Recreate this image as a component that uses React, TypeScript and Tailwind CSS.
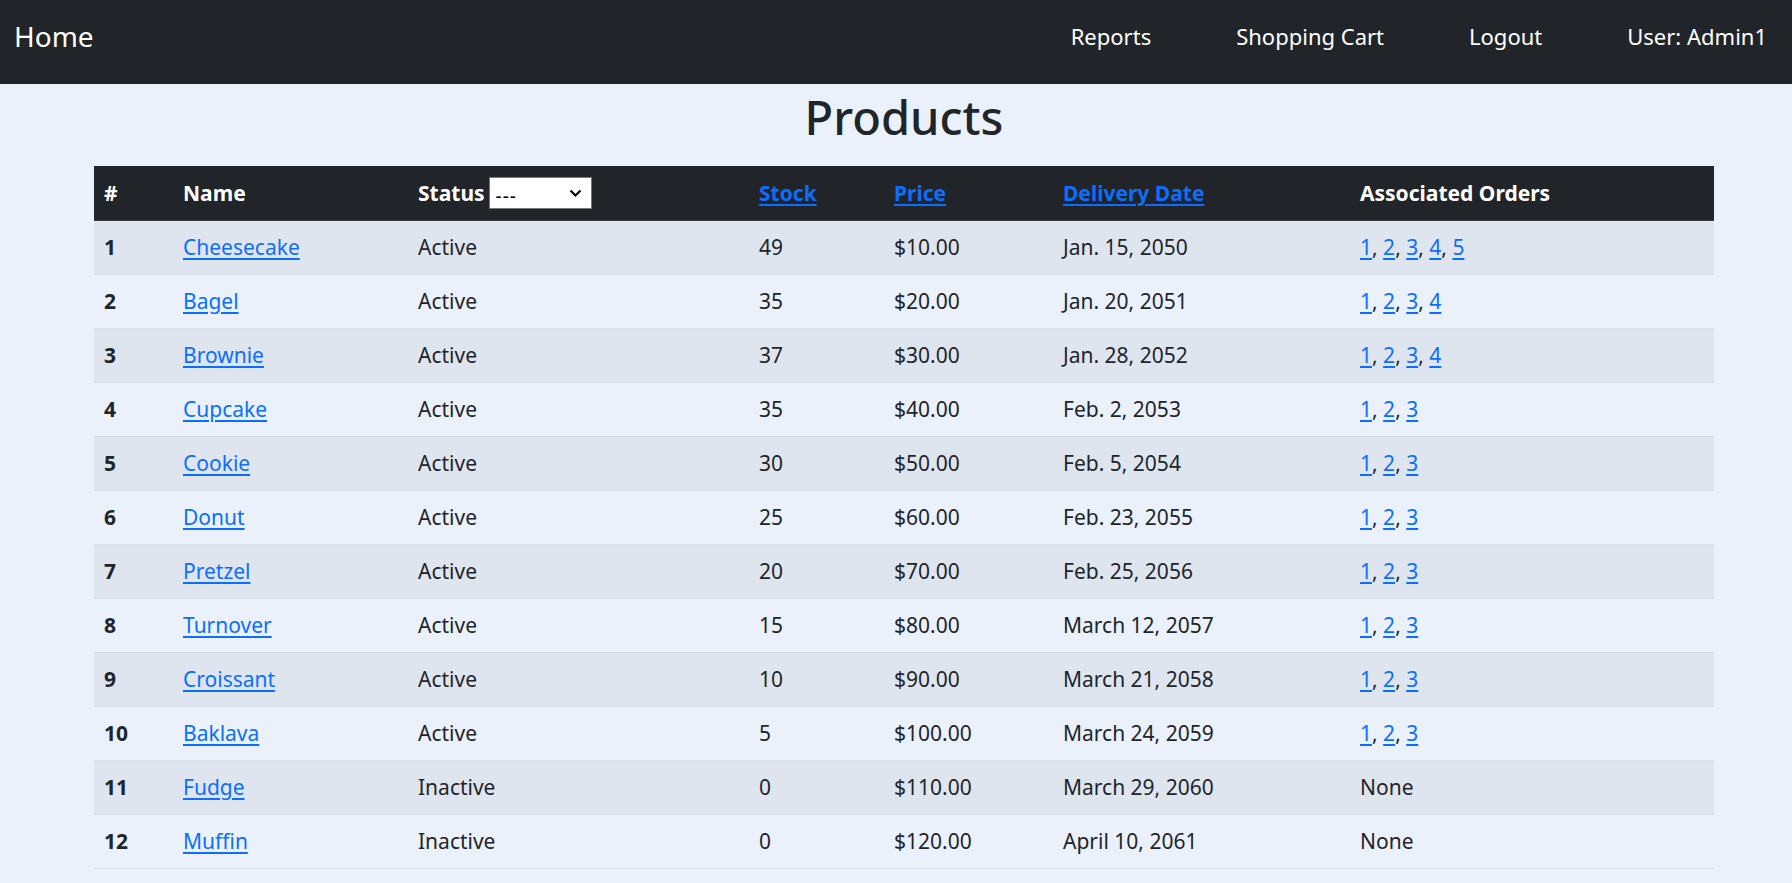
import type React from 'react';

interface Product {
  id: number;
  name: string;
  status: string;
  stock: number;
  price: string;
  delivery: string;
  orders: number[];
}

const products: Product[] = [
  { id: 1, name: 'Cheesecake', status: 'Active', stock: 49, price: '$10.00', delivery: 'Jan. 15, 2050', orders: [1, 2, 3, 4, 5] },
  { id: 2, name: 'Bagel', status: 'Active', stock: 35, price: '$20.00', delivery: 'Jan. 20, 2051', orders: [1, 2, 3, 4] },
  { id: 3, name: 'Brownie', status: 'Active', stock: 37, price: '$30.00', delivery: 'Jan. 28, 2052', orders: [1, 2, 3, 4] },
  { id: 4, name: 'Cupcake', status: 'Active', stock: 35, price: '$40.00', delivery: 'Feb. 2, 2053', orders: [1, 2, 3] },
  { id: 5, name: 'Cookie', status: 'Active', stock: 30, price: '$50.00', delivery: 'Feb. 5, 2054', orders: [1, 2, 3] },
  { id: 6, name: 'Donut', status: 'Active', stock: 25, price: '$60.00', delivery: 'Feb. 23, 2055', orders: [1, 2, 3] },
  { id: 7, name: 'Pretzel', status: 'Active', stock: 20, price: '$70.00', delivery: 'Feb. 25, 2056', orders: [1, 2, 3] },
  { id: 8, name: 'Turnover', status: 'Active', stock: 15, price: '$80.00', delivery: 'March 12, 2057', orders: [1, 2, 3] },
  { id: 9, name: 'Croissant', status: 'Active', stock: 10, price: '$90.00', delivery: 'March 21, 2058', orders: [1, 2, 3] },
  { id: 10, name: 'Baklava', status: 'Active', stock: 5, price: '$100.00', delivery: 'March 24, 2059', orders: [1, 2, 3] },
  { id: 11, name: 'Fudge', status: 'Inactive', stock: 0, price: '$110.00', delivery: 'March 29, 2060', orders: [] },
  { id: 12, name: 'Muffin', status: 'Inactive', stock: 0, price: '$120.00', delivery: 'April 10, 2061', orders: [] },
];

const linkCls = 'text-[#0d6efd] underline underline-offset-[3px] decoration-[1.5px]';

const App: React.FC = () => {
  return (
    <div className="min-h-[883px] bg-[#eaf1fb] text-[#212529] font-['Noto_Sans',sans-serif]">
      {/* Навбар */}
      <nav className="h-[84px] bg-[#212529] flex items-start justify-between pl-[14px] pr-[25px] pt-[15px]">
        <a href="#" className="text-[28px] leading-[42px] text-white">Home</a>
        <div className="flex gap-[85px] text-[22px] leading-[42px] text-white">
          <a href="#">Reports</a>
          <a href="#">Shopping Cart</a>
          <a href="#">Logout</a>
          <span>User: Admin1</span>
        </div>
      </nav>

      {/* Заголовок */}
      <h1 className="text-center text-[47px] font-medium leading-[56px] pt-[5px] pb-[21px] pl-[16px]">Products</h1>

      {/* Таблица */}
      <div className="ml-[94px] w-[1620px]">
        <table className="w-full border-collapse text-[21px] table-fixed">
          <colgroup>
            <col className="w-[79px]" />
            <col className="w-[235px]" />
            <col className="w-[341px]" />
            <col className="w-[135px]" />
            <col className="w-[169px]" />
            <col className="w-[297px]" />
            <col className="w-[364px]" />
          </colgroup>
          <thead>
            <tr className="bg-[#212529] text-white text-left font-bold border-b border-[#373b3e]">
              <th className="px-[10px] py-[10px] leading-[34px]">#</th>
              <th className="px-[10px] py-[10px] leading-[34px]">Name</th>
              <th className="px-[10px] py-[10px] leading-[34px]">
                <div className="flex items-center gap-[4px]">
                  <span>Status</span>
                  <div className="relative w-[103px] h-[32px] bg-white border border-[#767676]">
                    <select className="appearance-none w-full h-full bg-transparent text-[#000] text-[19px] font-normal pl-[6px] leading-[30px] outline-none tracking-[1px]">
                      <option>---</option>
                      <option>Active</option>
                      <option>Inactive</option>
                    </select>
                    <svg className="absolute right-[9px] top-[11px] pointer-events-none" width="13" height="9" viewBox="0 0 13 9">
                      <path d="M1.5 1.5 L6.5 6.5 L11.5 1.5" fill="none" stroke="#000" strokeWidth="2.2" />
                    </svg>
                  </div>
                </div>
              </th>
              <th className="px-[10px] py-[10px] leading-[34px]"><a href="#" className={linkCls}>Stock</a></th>
              <th className="px-[10px] py-[10px] leading-[34px]"><a href="#" className={linkCls}>Price</a></th>
              <th className="px-[10px] py-[10px] leading-[34px]"><a href="#" className={linkCls}>Delivery Date</a></th>
              <th className="px-[10px] py-[10px] leading-[34px]">Associated Orders</th>
            </tr>
          </thead>
          <tbody>
            {products.map((p, i) => (
              <tr key={p.id} className={`${i % 2 === 0 ? 'bg-[#dfe5ef]' : 'bg-[#eaf1fb]'} border-b border-[#d8dde6]`}>
                <td className="px-[10px] py-[10px] leading-[33px] font-bold">{p.id}</td>
                <td className="px-[10px] py-[10px] leading-[33px]"><a href="#" className={linkCls}>{p.name}</a></td>
                <td className="px-[10px] py-[10px] leading-[33px]">{p.status}</td>
                <td className="px-[10px] py-[10px] leading-[33px]">{p.stock}</td>
                <td className="px-[10px] py-[10px] leading-[33px]">{p.price}</td>
                <td className="px-[10px] py-[10px] leading-[33px]">{p.delivery}</td>
                <td className="px-[10px] py-[10px] leading-[33px]">
                  {p.orders.length === 0
                    ? 'None'
                    : p.orders.map((o, j) => (
                        <span key={o}>
                          <a href="#" className={linkCls}>{o}</a>
                          {j < p.orders.length - 1 ? ', ' : ''}
                        </span>
                      ))}
                </td>
              </tr>
            ))}
          </tbody>
        </table>
      </div>
    </div>
  );
};

export default App;
